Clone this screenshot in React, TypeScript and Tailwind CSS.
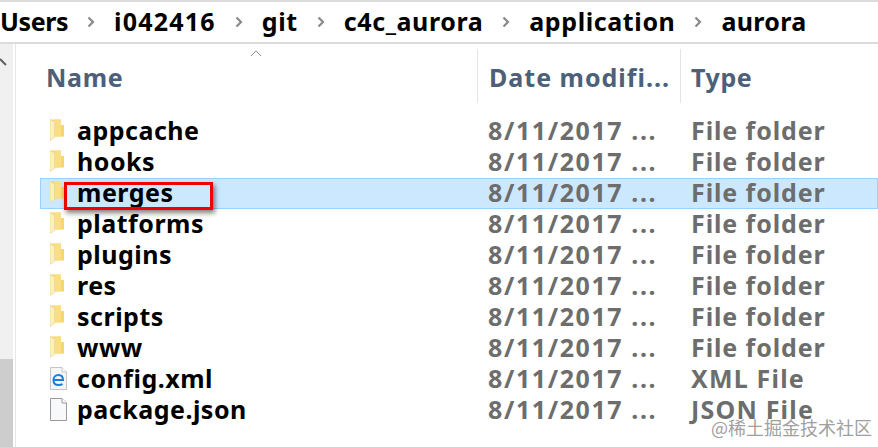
const font = { fontFamily: '"Noto Sans", sans-serif' };

type Row = { name: string; date: string; type: string; icon: "folder" | "edge" | "file" };

const rows: Row[] = [
  { name: "appcache", date: "8/11/2017 ...", type: "File folder", icon: "folder" },
  { name: "hooks", date: "8/11/2017 ...", type: "File folder", icon: "folder" },
  { name: "merges", date: "8/11/2017 ...", type: "File folder", icon: "folder" },
  { name: "platforms", date: "8/11/2017 ...", type: "File folder", icon: "folder" },
  { name: "plugins", date: "8/11/2017 ...", type: "File folder", icon: "folder" },
  { name: "res", date: "8/11/2017 ...", type: "File folder", icon: "folder" },
  { name: "scripts", date: "8/11/2017 ...", type: "File folder", icon: "folder" },
  { name: "www", date: "8/11/2017 ...", type: "File folder", icon: "folder" },
  { name: "config.xml", date: "8/11/2017 ...", type: "XML File", icon: "edge" },
  { name: "package.json", date: "8/11/2017 ...", type: "JSON File", icon: "file" },
];

const crumbs = [
  { label: "i042416", cls: "tracking-[1.2px]" },
  { label: "git", cls: "tracking-[0.6px]" },
  { label: "c4c_aurora", cls: "tracking-[0.6px]" },
  { label: "application", cls: "tracking-[0.6px]" },
  { label: "aurora", cls: "tracking-[0.3px]" },
];

const Chevron = () => (
  <svg width="8" height="12" viewBox="0 0 8 12" className="shrink-0">
    <path d="M1.5 1.5 L6 6 L1.5 10.5" fill="none" stroke="#8a8a8a" strokeWidth="2.2" />
  </svg>
);

const FolderIcon = () => (
  <svg width="14" height="22" viewBox="0 0 14 22" className="-mt-[3px]">
    <path d="M0 0.5 L11 0.5 L11 6 L14 6 L14 17.5 L0 17.5 Z" fill="#f5d66f" />
    <path d="M4.5 0.5 L11 0.5 L11 17.5 L4.5 17.5 Z" fill="#fade86" />
    <path d="M0 0.5 L4.5 3 L4.5 18.5 L0 21.5 Z" fill="#fdf0bd" stroke="#e9d48c" strokeWidth="0.6" />
  </svg>
);

const EdgeFileIcon = () => (
  <svg width="17" height="23" viewBox="0 0 17 23" className="-mt-[3px]">
    <path d="M0.5 0.5 L12 0.5 L16.5 5 L16.5 22.5 L0.5 22.5 Z" fill="#f5f5f5" stroke="#c4c4c4" />
    <path d="M12 0.5 L12 5 L16.5 5" fill="#ffffff" stroke="#c4c4c4" />
    <path d="M4 13 L13 13 C13 9.5 11 8 8.5 8 C5.5 8 3.5 10.2 3.5 13.2 C3.5 16.2 5.6 18 8.5 18 C10 18 11.5 17.7 12.5 17" fill="none" stroke="#1a7fdc" strokeWidth="2" />
  </svg>
);

const BlankFileIcon = () => (
  <svg width="17" height="23" viewBox="0 0 17 23" className="-mt-[3px]">
    <path d="M0.5 0.5 L12 0.5 L16.5 5 L16.5 22.5 L0.5 22.5 Z" fill="#f8f9fa" stroke="#9a9a9a" />
    <path d="M12 0.5 L12 5 L16.5 5" fill="#ffffff" stroke="#9a9a9a" />
  </svg>
);

export default function App() {
  return (
    <div className="relative w-[878px] h-[447px] overflow-hidden bg-white" style={font}>
      {/* Breadcrumb */}
      <div className="h-11 flex items-center border-t-2 border-b-2 border-[#dcdcdc] text-[25px] font-bold text-black whitespace-nowrap">
        <span className="tracking-[-0.4px]">Users</span>
        {crumbs.map((c) => (
          <div key={c.label} className="flex items-center">
            <span className="w-[46px] flex justify-center"><Chevron /></span>
            <span className={c.cls}>{c.label}</span>
          </div>
        ))}
      </div>

      <div className="flex h-[403px]">
        {/* Scrollbar */}
        <div className="w-[13px] flex flex-col bg-[#f0f0f0]">
          <div className="h-[315px] pt-[14px]">
            <svg width="8" height="10" viewBox="0 0 8 10">
              <path d="M0 1 L6 7" stroke="#606060" strokeWidth="2" />
            </svg>
          </div>
          <div className="flex-1 bg-[#cdcdcd]" />
        </div>
        <div className="w-[3px] bg-white border-r border-[#e6e6e6]" />

        {/* File list */}
        <div className="flex-1 relative">
          <div className="h-[58px] flex text-[25px] font-bold text-[#4c607a] relative">
            <span className="absolute left-[234px] top-[6px]">
              <svg width="12" height="7" viewBox="0 0 12 7">
                <path d="M1 6 L6 1 L11 6" fill="none" stroke="#8d8d8d" />
              </svg>
            </span>
            <div className="w-[462px] h-[54px] mt-[5px] pl-[30px] pt-[4px] flex items-center border-r border-[#e4e4e4] tracking-[0.7px]">Name</div>
            <div className="w-[203px] h-[54px] mt-[5px] pl-[11px] pt-[4px] flex items-center border-r border-[#e4e4e4] tracking-[1px]">Date modifi...</div>
            <div className="h-[54px] mt-[5px] pl-[10px] pt-[4px] flex items-center tracking-[0.6px]">Type</div>
          </div>
          <div className="mt-[14px]">
            {rows.map((r) => (
              <div
                key={r.name}
                className={`h-[31px] flex items-center text-[25px] font-bold border ${r.name === "merges" ? "bg-[#cce8ff] border-[#99d1ff]" : "border-transparent"}`}
                style={{ marginLeft: 24 }}
              >
                <span className="w-[36px] pl-[9px] flex justify-start">
                  {r.icon === "folder" && <FolderIcon />}
                  {r.icon === "edge" && <EdgeFileIcon />}
                  {r.icon === "file" && <BlankFileIcon />}
                </span>
                <span className="w-[411px] text-black -mt-[2px] tracking-[0.5px]">{r.name}</span>
                <span className="w-[203px] text-[#6d6d6d] -mt-[2px] tracking-[1.6px]">{r.date}</span>
                <span className={`text-[#6d6d6d] -mt-[2px] ${r.icon === "folder" ? "tracking-[0.9px]" : "tracking-[1.2px]"}`}>{r.type}</span>
              </div>
            ))}
          </div>
        </div>
      </div>

      {/* Red highlight */}
      <div className="absolute left-[64px] top-[182px] w-[149px] h-[28px] border-[3px] border-[#f00000] shadow-[2px_3px_5px_rgba(0,0,0,0.5)]" />

      {/* Watermark */}
      <div
        className="absolute right-[6px] bottom-[6px] text-[18px] text-[#a0a0a0] whitespace-nowrap"
        style={{ fontFamily: '"Noto Sans CJK SC", sans-serif' }}
      >
        @稀土掘金技术社区
      </div>
    </div>
  );
}
